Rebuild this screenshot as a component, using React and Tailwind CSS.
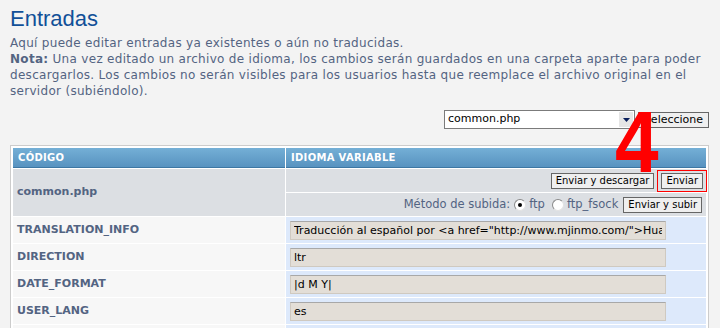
function Btn({ children, className = "" }) {
  return (
    <button
      type="button"
      className={
        "h-[16px] px-[4px] border border-[#666666] bg-[#efefef] text-[10px] leading-none text-black font-['DejaVu_Sans',Verdana,sans-serif] " +
        className
      }
    >
      {children}
    </button>
  );
}

function Radio({ checked }) {
  return (
    <span className="inline-flex items-center justify-center w-[12px] h-[12px] rounded-full bg-white border border-[#8a8a8a] border-b-[#e2e2e2] border-r-[#e2e2e2]">
      {checked && <span className="w-[4px] h-[4px] rounded-full bg-black" />}
    </span>
  );
}

const rows = [
  ["TRANSLATION_INFO", 'Traducción al español por <a href="http://www.mjinmo.com/">Huan Manwe</a>'],
  ["DIRECTION", "ltr"],
  ["DATE_FORMAT", "|d M Y|"],
  ["USER_LANG", "es"],
  ["PLURAL_RULE", "1"],
];

export default function App() {
  return (
    <div className="relative min-h-screen bg-[#f3f3f3] pl-[10px] pr-[11px] pt-[6px] font-['DejaVu_Sans',Verdana,sans-serif] text-[#536482]">
      <h1 className="font-['Liberation_Sans',Arial,sans-serif] text-[22px] leading-[26px] text-[#115098]">
        Entradas
      </h1>
      <p className="mt-[3px] text-[12px] leading-[16px] tracking-[0.3px] whitespace-nowrap">
        Aquí puede editar entradas ya existentes o aún no traducidas.
        <br />
        <b>Nota:</b> Una vez editado un archivo de idioma, los cambios serán guardados en una carpeta aparte para poder
        <br />
        descargarlos. Los cambios no serán visibles para los usuarios hasta que reemplace el archivo original en el
        <br />
        servidor (subiéndolo).
      </p>

      <div className="mt-[11px] flex h-[19px] items-center justify-end gap-[3px]">
        <div className="flex h-[19px] w-[191px] items-center justify-between border border-[#7b7b7b] bg-white pl-[3px] pr-[1px] text-[11px] text-black">
          <span>common.php</span>
          <span className="flex h-[15px] w-[14px] items-center justify-center bg-[#e6e6e6]">
            <svg width="7" height="4" viewBox="0 0 7 4">
              <path d="M0 0h7L3.5 4z" fill="#0a1f5c" />
            </svg>
          </span>
        </div>
        <Btn className="text-[11px] w-[71px]">Seleccione</Btn>
      </div>

      <div className="mt-[16px] border border-[#cccccc] bg-white p-[2px]">
        <div className="grid grid-cols-[272px_1fr] gap-px">
          <div className="flex h-[20px] items-center border-b border-[#3d77a3] bg-gradient-to-b from-[#74afd6] to-[#5893c0] pl-[5px] text-[10px] font-bold tracking-[0.3px] text-white">
            CÓDIGO
          </div>
          <div className="flex h-[20px] items-center border-b border-[#3d77a3] bg-gradient-to-b from-[#74afd6] to-[#5893c0] pl-[5px] text-[10px] font-bold tracking-[0.3px] text-white">
            IDIOMA VARIABLE
          </div>

          <div className="row-span-2 flex items-center bg-[#dcdfe3] pl-[4px] text-[11px] font-bold">
            common.php
          </div>
          <div className="flex h-[23px] items-center justify-end gap-[3px] bg-[#dcdfe3]">
            <Btn>Enviar y descargar</Btn>
            <div className="-mr-[1px] flex h-[22px] items-center border border-[#ff0000] px-[3px]">
              <Btn>Enviar</Btn>
            </div>
          </div>
          <div className="flex h-[23px] items-center justify-end gap-[3px] bg-[#dcdfe3] pr-[4px] text-[11.5px]">
            <span className="mr-[1px]">Método de subida:</span>
            <Radio checked />
            <span className="mr-[4px]">ftp</span>
            <Radio />
            <span className="mr-[2px]">ftp_fsock</span>
            <Btn>Enviar y subir</Btn>
          </div>

          {rows.map(([k, v]) => (
            <div key={k} className="contents">
              <div className="flex h-[26px] items-center bg-[#f7f7f7] pl-[4px] text-[11px] font-bold">
                {k}
              </div>
              <div className="flex h-[26px] items-center bg-[#dde9fb] pl-[4px]">
                <input
                  readOnly
                  value={v}
                  className="h-[19px] w-[376px] border border-[#cfc9c0] border-t-[#a8a8a8] bg-[#e3ded7] px-[3px] text-[11px] text-black outline-none font-['DejaVu_Sans',Verdana,sans-serif]"
                />
              </div>
            </div>
          ))}
        </div>
      </div>

      <span className="absolute left-[615px] top-[98px] origin-left scale-x-[0.9] font-['Liberation_Sans',Arial,sans-serif] text-[87px] font-bold leading-none text-[#ff0000]">
        4
      </span>
    </div>
  );
}
